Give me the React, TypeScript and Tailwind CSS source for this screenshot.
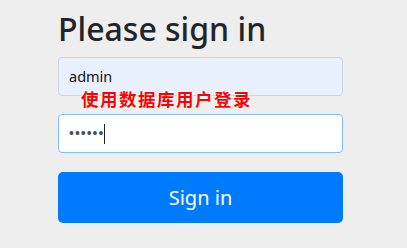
import React from "react";

export default function App() {
  return (
    <div className="min-h-[248px] w-[407px] bg-[#eeeeee] font-['Noto_Sans','Noto_Sans_CJK_SC',sans-serif]">
      <div className="relative ml-[58px] w-[285px] pt-[10px]">
        <h2 className="mb-[9px] text-[32px] leading-[38px] font-medium text-[#212529]">
          Please sign in
        </h2>
        <div className="flex h-[39px] items-center rounded-[4px] border border-[#cfd4da] bg-[#e8f0fe] px-[10px] text-[14.5px] text-[#111]">
          admin
        </div>
        <div className="mt-[18px] flex h-[39px] items-center rounded-[4px] border border-[#80bdff] bg-white px-[10px]">
          <span className="text-[13px] font-bold tracking-[1px] text-[#495057]">••••••</span>
          <span className="h-[20px] w-[1px] bg-[#222]" />
        </div>
        <button className="mt-[19px] flex h-[51px] w-full items-center justify-center rounded-[5px] bg-[#007bff] text-[20px] text-white">
          Sign in
        </button>
        <div className="absolute top-[89px] left-[23px] text-[17.5px] leading-[20px] font-bold tracking-[1.5px] text-[#ff0000] [text-shadow:0_0_2px_#fff,0_0_2px_#fff,0_0_2px_#fff]">
          使用数据库用户登录
        </div>
      </div>
    </div>
  );
}
